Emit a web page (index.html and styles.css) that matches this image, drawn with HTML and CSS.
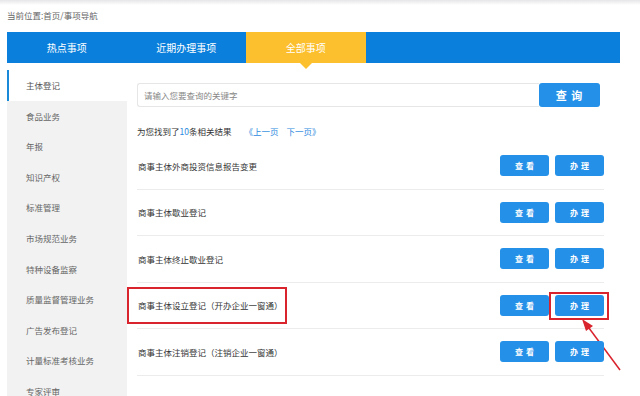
FILE: index.html
```html
<!DOCTYPE html>
<html lang="zh-CN">
<head>
<meta charset="utf-8">
<title>事项导航</title>
<link rel="stylesheet" href="styles.css">
</head>
<body>
<div class="topstrip"></div>
<div class="page">
  <div class="crumb">当前位置:首页/事项导航</div>
  <div class="tabs">
    <div class="tab">热点事项</div>
    <div class="tab">近期办理事项</div>
    <div class="tab active">全部事项</div>
  </div>
  <div class="main">
    <ul class="side">
      <li class="on">主体登记</li>
      <li>食品业务</li>
      <li>年报</li>
      <li>知识产权</li>
      <li>标准管理</li>
      <li>市场规范业务</li>
      <li>特种设备监察</li>
      <li>质量监督管理业务</li>
      <li>广告发布登记</li>
      <li>计量标准考核业务</li>
      <li>专家评审</li>
    </ul>
    <div class="content">
      <div class="search">
        <div class="input">请输入您要查询的关键字</div>
        <div class="sbtn">查 询</div>
      </div>
      <div class="found">为您找到了<span class="num">10</span>条相关结果<span class="pager"><span>《上一页</span><span>下一页》</span></span></div>
      <div class="list">
        <div class="row"><span class="name">商事主体外商投资信息报告变更</span><span class="btns"><span class="btn">查看</span><span class="btn">办理</span></span></div>
        <div class="row"><span class="name">商事主体歇业登记</span><span class="btns"><span class="btn">查看</span><span class="btn">办理</span></span></div>
        <div class="row"><span class="name">商事主体终止歇业登记</span><span class="btns"><span class="btn">查看</span><span class="btn">办理</span></span></div>
        <div class="row marked"><span class="name">商事主体设立登记（开办企业一窗通）</span><span class="btns"><span class="btn">查看</span><span class="btn">办理</span></span>
          <span class="mark-text"></span>
          <span class="mark-btn"></span>
          <svg class="arrow" width="50" height="60" viewBox="0 0 50 60"><line x1="44" y1="52" x2="10" y2="6" stroke="#d9232d" stroke-width="1.5"/><polygon points="6,1 17,8 10,13" fill="#d9232d"/></svg>
        </div>
        <div class="row"><span class="name">商事主体注销登记（注销企业一窗通）</span><span class="btns"><span class="btn">查看</span><span class="btn">办理</span></span></div>
      </div>
    </div>
  </div>
</div>
</body>
</html>
```
FILE: styles.css
```css
html, body { margin: 0; padding: 0; overflow: hidden; background: #fff; }
body { font-family: "Noto Sans CJK SC", "Noto Sans", sans-serif; color: #333; }
.topstrip { height: 5px; background: linear-gradient(#e6e6e8, #f7f7f8 70%, #fff); }
.page { padding-left: 7px; width: 613px; }
.crumb { font-size: 8.5px; color: #666; height: 20px; line-height: 20px; }
.tabs { margin-top: 7px; height: 31px; background: #0a80dc; display: flex; }
.tab { width: 119.5px; color: #fff; font-size: 10px; line-height: 31px; text-align: center; position: relative; }
.tab.active { background: #fcbf2e; }
.tab.active::after { content: ""; position: absolute; left: 50%; top: 31px; margin-left: -6px; border-left: 6px solid transparent; border-right: 6px solid transparent; border-top: 6px solid #fcbf2e; }
.main { display: flex; margin-top: 7px; }
.side { list-style: none; margin: 0; padding: 0; width: 120px; background: #f2f2f2; }
.side li { height: 30.6px; line-height: 30.6px; padding-left: 19px; font-size: 8.5px; color: #666; }
.side li.on { background: #fff; border-left: 2px solid #1a8ad8; padding-left: 17px; color: #555; }
.content { margin-left: 10px; width: 467px; padding-top: 13px; }
.search { display: flex; width: 463px; height: 24px; }
.input { flex: 1; border: 1px solid #e6e6e6; border-right: none; border-radius: 3px 0 0 3px; font-size: 8.5px; color: #888; line-height: 22px; padding-left: 6px; }
.sbtn { width: 61px; background: #2590e7; color: #fff; font-weight: bold; font-size: 11px; line-height: 24px; text-align: center; border-radius: 3px; letter-spacing: 1px; }
.found { margin-top: 13px; height: 23px; line-height: 23px; font-size: 8.5px; color: #333; }
.num { color: #2d8ae0; }
.pager { color: #2d8ae0; margin-left: 13px; }
.pager span { margin-right: 8px; }
.row { height: 46.5px; border-bottom: 1px solid #ececec; box-sizing: border-box; display: flex; align-items: center; justify-content: space-between; font-size: 8.5px; color: #333; position: relative; }
.name { padding-left: 1px; }
.btns { display: flex; gap: 6px; }
.btn { width: 49px; height: 21px; line-height: 21px; background: #2590e7; color: #fff; font-weight: bold; font-size: 8px; letter-spacing: 3px; text-indent: 3px; text-align: center; border-radius: 3px; }
.mark-text { position: absolute; left: -10px; top: 4px; width: 156px; height: 33px; border: 2.5px solid #d9232d; }
.mark-btn { position: absolute; left: 412px; top: 9px; width: 56px; height: 24px; border: 2.5px solid #d9232d; }
.arrow { position: absolute; right: -22px; top: 35px; }
```
